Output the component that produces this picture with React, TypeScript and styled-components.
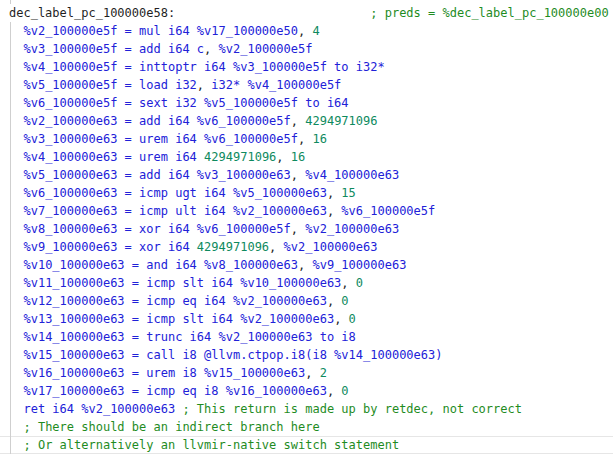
import React from "react";
import styled, { createGlobalStyle } from "styled-components";

const Global = createGlobalStyle`
  html, body { margin: 0; padding: 0; background: #ffffff; }
  body { font-family: "DejaVu Sans Mono", "Liberation Mono", monospace; }
`;

const Editor = styled.div`
  width: 613px;
  height: 457px;
  overflow: hidden;
  background: #ffffff;
  font-family: "DejaVu Sans Mono", "Liberation Mono", monospace;
  font-size: 12px;
  display: flex;
  flex-direction: column;
`;

const TopGuide = styled.div`
  height: 4px;
  margin-left: 10px;
  border-left: 1px solid #cfcfcf;
`;

const Row = styled.div<{ $indent?: boolean; $current?: boolean }>`
  height: 18px;
  line-height: 18px;
  white-space: pre;
  position: relative;
  padding-left: 9px;
  color: #1f1f1f;
  box-sizing: border-box;
  ${(p) =>
    p.$current &&
    `
    border-top: 1px solid #e6e6e6;
    border-bottom: 1px solid #e6e6e6;
    line-height: 16px;
  `}
  ${(p) =>
    p.$indent &&
    `
    &::before {
      content: "";
      position: absolute;
      left: 10px;
      top: ${p.$current ? "-1px" : "0"};
      bottom: ${p.$current ? "-1px" : "0"};
      border-left: 1px solid #cfcfcf;
    }
  `}
`;

const Ins = styled.span`
  color: #2121d8;
`;
const Num = styled.span`
  color: #0e8a5e;
`;
const Cmt = styled.span`
  color: #1f8c1f;
`;
const Pun = styled.span`
  color: #1f1f1f;
`;

type Seg = { t: "i" | "n" | "c" | "p" | "l"; s: string };

function tokenize(line: string): Seg[] {
  const out: Seg[] = [];
  const ci = line.indexOf(";");
  const code = ci >= 0 ? line.slice(0, ci) : line;
  const cmt = ci >= 0 ? line.slice(ci) : "";
  const re = /(,)|(\b\d+\b)/g;
  let last = 0;
  let m: RegExpExecArray | null;
  while ((m = re.exec(code))) {
    const before = code.slice(last, m.index);
    // numbers preceded by letters/underscore are part of identifiers
    if (m[2] && /[A-Za-z_%@.]$/.test(code.slice(0, m.index))) continue;
    if (before) out.push({ t: "i", s: before });
    out.push({ t: m[1] ? "p" : "n", s: m[0] });
    last = m.index + m[0].length;
  }
  if (last < code.length) out.push({ t: "i", s: code.slice(last) });
  if (cmt) out.push({ t: "c", s: cmt });
  return out;
}

const body = [
  "%v2_100000e5f = mul i64 %v17_100000e50, 4",
  "%v3_100000e5f = add i64 c, %v2_100000e5f",
  "%v4_100000e5f = inttoptr i64 %v3_100000e5f to i32*",
  "%v5_100000e5f = load i32, i32* %v4_100000e5f",
  "%v6_100000e5f = sext i32 %v5_100000e5f to i64",
  "%v2_100000e63 = add i64 %v6_100000e5f, 4294971096",
  "%v3_100000e63 = urem i64 %v6_100000e5f, 16",
  "%v4_100000e63 = urem i64 4294971096, 16",
  "%v5_100000e63 = add i64 %v3_100000e63, %v4_100000e63",
  "%v6_100000e63 = icmp ugt i64 %v5_100000e63, 15",
  "%v7_100000e63 = icmp ult i64 %v2_100000e63, %v6_100000e5f",
  "%v8_100000e63 = xor i64 %v6_100000e5f, %v2_100000e63",
  "%v9_100000e63 = xor i64 4294971096, %v2_100000e63",
  "%v10_100000e63 = and i64 %v8_100000e63, %v9_100000e63",
  "%v11_100000e63 = icmp slt i64 %v10_100000e63, 0",
  "%v12_100000e63 = icmp eq i64 %v2_100000e63, 0",
  "%v13_100000e63 = icmp slt i64 %v2_100000e63, 0",
  "%v14_100000e63 = trunc i64 %v2_100000e63 to i8",
  "%v15_100000e63 = call i8 @llvm.ctpop.i8(i8 %v14_100000e63)",
  "%v16_100000e63 = urem i8 %v15_100000e63, 2",
  "%v17_100000e63 = icmp eq i8 %v16_100000e63, 0",
  "ret i64 %v2_100000e63 ; This return is made up by retdec, not correct",
  "; There should be an indirect branch here",
  "; Or alternatively an llvmir-native switch statement",
];

function Line({ text }: { text: string }) {
  return (
    <>
      {"  "}
      {tokenize(text).map((g, i) =>
        g.t === "i" ? (
          <Ins key={i}>{g.s}</Ins>
        ) : g.t === "n" ? (
          <Num key={i}>{g.s}</Num>
        ) : g.t === "c" ? (
          <Cmt key={i}>{g.s}</Cmt>
        ) : (
          <Pun key={i}>{g.s}</Pun>
        )
      )}
    </>
  );
}

export default function App() {
  const label = "dec_label_pc_100000e58:";
  const pad = " ".repeat(50 - label.length);
  return (
    <>
      <Global />
      <Editor>
        <TopGuide />
        <Row>
          {label}
          {pad}
          <Cmt>; preds = %dec_label_pc_100000e00</Cmt>
        </Row>
        {body.map((l, i) => (
          <Row key={i} $indent $current={i === body.length - 1}>
            <Line text={l} />
          </Row>
        ))}
      </Editor>
    </>
  );
}
